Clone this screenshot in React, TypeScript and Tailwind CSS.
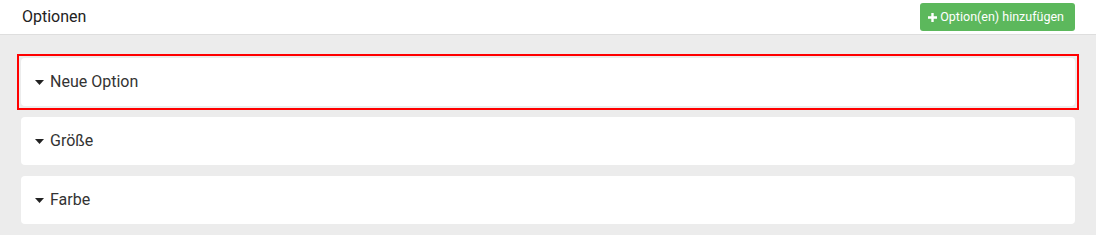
const options = [
  { label: 'Neue Option', active: true },
  { label: 'Größe', active: false },
  { label: 'Farbe', active: false },
]

function Caret() {
  return (
    <svg width="9" height="5" viewBox="0 0 9 5" className="shrink-0">
      <path d="M0 0h9L4.5 5z" fill="#222" />
    </svg>
  )
}

function PlusIcon() {
  return (
    <svg width="9" height="9" viewBox="0 0 9 9" className="shrink-0">
      <path d="M3.3 0h2.4v3.3H9v2.4H5.7V9H3.3V5.7H0V3.3h3.3z" fill="#fff" />
    </svg>
  )
}

function OptionRow({ label }: { label: string }) {
  return (
    <div className="h-[48px] bg-white rounded-[4px] flex items-center gap-[6px] pl-[14px]">
      <Caret />
      <span className="text-[16px] text-[#333]">{label}</span>
    </div>
  )
}

export default function App() {
  return (
    <div className="w-[1096px] h-[235px] overflow-hidden bg-[#ececec] font-['Roboto',sans-serif]">
      {/* Header */}
      <div className="h-[35px] bg-white border-b border-[#dedede] flex items-center justify-between pl-[22px] pr-[21px]">
        <h2 className="text-[16px] text-[#222]">Optionen</h2>
        <button className="h-[28px] pl-[8px] pr-[11px] bg-[#5cb85c] rounded-[3px] flex items-center gap-[3px] text-white text-[12.5px]">
          <PlusIcon />
          Option(en) hinzufügen
        </button>
      </div>

      {/* Options */}
      <div className="flex flex-col gap-[11px] px-[21px] pt-[23px]">
        {options.map((opt) =>
          opt.active ? (
            <div key={opt.label} className="-m-[4px] border-2 border-[#ff0000] p-[2px]">
              <OptionRow label={opt.label} />
            </div>
          ) : (
            <OptionRow key={opt.label} label={opt.label} />
          )
        )}
      </div>
    </div>
  )
}
